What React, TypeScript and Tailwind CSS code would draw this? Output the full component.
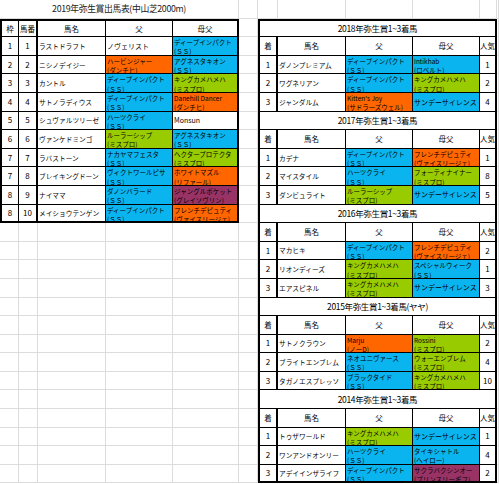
import React from 'react';

type Tone = 'sky' | 'orange' | 'lime' | 'plum' | 'none';
type Blood = { name: string; sub?: string; tone: Tone };
type Entry = { waku: number; num: number; horse: string; sire: Blood; dam: Blood };
type Placed = { rank: number; horse: string; sire: Blood; dam: Blood; pop: number };
type Section = { title: string; rows: Placed[] };

const toneBg: Record<Tone, string> = {
    sky: 'bg-[#0ab4ef]',
    orange: 'bg-[#ff6600]',
    lime: 'bg-[#99cc00]',
    plum: 'bg-[#993366]',
    none: 'bg-white',
};

const dip: Blood = { name: 'ディープインパクト', sub: '(ＳＳ)', tone: 'sky' };
const hearts: Blood = { name: 'ハーツクライ', sub: '(ＳＳ)', tone: 'sky' };
const kingKame: Blood = { name: 'キングカメハメハ', sub: '(ミスプロ)', tone: 'lime' };
const ruler: Blood = { name: 'ルーラーシップ', sub: '(ミスプロ)', tone: 'lime' };
const tachyon: Blood = { name: 'アグネスタキオン', sub: '(ＳＳ)', tone: 'sky' };
const french: Blood = { name: 'フレンチデピュティ', sub: '(ヴァイスリージェ)', tone: 'orange' };
const sunday: Blood = { name: 'サンデーサイレンス', tone: 'sky' };

const entries: Entry[] = [
    { waku: 1, num: 1, horse: 'ラストドラフト', sire: { name: 'ノヴェリスト', tone: 'none' }, dam: dip },
    { waku: 2, num: 2, horse: 'ニシノデイジー', sire: { name: 'ハービンジャー', sub: '(ダンチヒ)', tone: 'orange' }, dam: tachyon },
    { waku: 3, num: 3, horse: 'カントル', sire: dip, dam: kingKame },
    { waku: 4, num: 4, horse: 'サトノラディウス', sire: dip, dam: { name: 'Danehill Dancer', sub: '(ダンチヒ)', tone: 'orange' } },
    { waku: 5, num: 5, horse: 'シュヴァルツリーゼ', sire: hearts, dam: { name: 'Monsun', tone: 'none' } },
    { waku: 6, num: 6, horse: 'ヴァンケドミンゴ', sire: ruler, dam: tachyon },
    { waku: 7, num: 7, horse: 'ラバストーン', sire: { name: 'ナカヤマフェスタ', sub: '(ＳＳ)', tone: 'sky' }, dam: { name: 'ヘクタープロテクタ', sub: '(ミスプロ)', tone: 'lime' } },
    { waku: 7, num: 8, horse: 'ブレイキングドーン', sire: { name: 'ヴィクトワールピサ', sub: '(ＳＳ)', tone: 'sky' }, dam: { name: 'ホワイトマズル', sub: '(リファール)', tone: 'orange' } },
    { waku: 8, num: 9, horse: 'ナイママ', sire: { name: 'ダノンバラード', sub: '(ＳＳ)', tone: 'sky' }, dam: { name: 'ジャングルポケット', sub: '(グレイソヴリン)', tone: 'plum' } },
    { waku: 8, num: 10, horse: 'メイショウテンゲン', sire: dip, dam: french },
];

const sections: Section[] = [
    {
        title: '2018年弥生賞1~3着馬',
        rows: [
            { rank: 1, horse: 'ダノンプレミアム', sire: dip, dam: { name: 'Intikhab', sub: '(ロベルト)', tone: 'sky' }, pop: 1 },
            { rank: 2, horse: 'ワグネリアン', sire: dip, dam: kingKame, pop: 2 },
            { rank: 3, horse: 'ジャンダルム', sire: { name: "Kitten's Joy", sub: '(サドラーズウェル)', tone: 'orange' }, dam: sunday, pop: 4 },
        ],
    },
    {
        title: '2017年弥生賞1~3着馬',
        rows: [
            { rank: 1, horse: 'カデナ', sire: dip, dam: french, pop: 1 },
            { rank: 2, horse: 'マイスタイル', sire: hearts, dam: { name: 'フォーティナイナー', sub: '(ミスプロ)', tone: 'lime' }, pop: 8 },
            { rank: 3, horse: 'ダンビュライト', sire: ruler, dam: sunday, pop: 5 },
        ],
    },
    {
        title: '2016年弥生賞1~3着馬',
        rows: [
            { rank: 1, horse: 'マカヒキ', sire: dip, dam: french, pop: 2 },
            { rank: 2, horse: 'リオンディーズ', sire: kingKame, dam: { name: 'スペシャルウィーク', sub: '(ＳＳ)', tone: 'sky' }, pop: 1 },
            { rank: 3, horse: 'エアスピネル', sire: kingKame, dam: sunday, pop: 3 },
        ],
    },
    {
        title: '2015年弥生賞1~3着馬(ヤヤ)',
        rows: [
            { rank: 1, horse: 'サトノクラウン', sire: { name: 'Marju', sub: '(ノーD)', tone: 'orange' }, dam: { name: 'Rossini', sub: '(ミスプロ)', tone: 'lime' }, pop: 2 },
            { rank: 2, horse: 'ブライトエンブレム', sire: { name: 'ネオユニヴァース', sub: '(ＳＳ)', tone: 'sky' }, dam: { name: 'ウォーエンブレム', sub: '(ミスプロ)', tone: 'lime' }, pop: 4 },
            { rank: 3, horse: 'タガノエスプレッソ', sire: { name: 'ブラックタイド', sub: '(ＳＳ)', tone: 'sky' }, dam: kingKame, pop: 10 },
        ],
    },
    {
        title: '2014年弥生賞1~3着馬',
        rows: [
            { rank: 1, horse: 'トゥザワールド', sire: kingKame, dam: sunday, pop: 1 },
            { rank: 2, horse: 'ワンアンドオンリー', sire: hearts, dam: { name: 'タイキシャトル', sub: '(ヘイロー)', tone: 'sky' }, pop: 4 },
            { rank: 3, horse: 'アデイインザライフ', sire: dip, dam: { name: 'サクラバクシンオー', sub: '(プリンスリーギフ)', tone: 'plum' }, pop: 2 },
        ],
    },
];

// border helper: thick line on the right / bottom edge of a table
const edge = (r2?: boolean, b2?: boolean) =>
    `${r2 ? 'border-r-2' : 'border-r'} ${b2 ? 'border-b-2' : 'border-b'} border-black`;

const BloodCell = ({ b, r2, b2 }: { b: Blood; r2?: boolean; b2?: boolean }) => (
    <div
        className={`${toneBg[b.tone]} ${edge(r2, b2)} overflow-hidden whitespace-nowrap pl-px ${
            b.sub ? 'flex flex-col pt-px text-[6.5px] leading-[9.2px]' : 'flex items-center text-[7px]'
        }`}
    >
        {b.sub ? (
            <>
                <span>{b.name}</span>
                <span>{b.sub}</span>
            </>
        ) : (
            b.name
        )}
    </div>
);

const Center = ({ children, r2, b2, size = 'text-[7.5px]' }: { children: React.ReactNode; r2?: boolean; b2?: boolean; size?: string }) => (
    <div className={`${edge(r2, b2)} ${size} flex items-center justify-center overflow-hidden whitespace-nowrap bg-white`}>
        {children}
    </div>
);

const Name = ({ children, b2 }: { children: React.ReactNode; b2?: boolean }) => (
    <div className={`${edge(false, b2)} flex items-center overflow-hidden whitespace-nowrap bg-white pl-px text-[6.7px]`}>
        {children}
    </div>
);

const App: React.FC = () => {
    const blanks = Array.from({ length: 127 });

    return (
        <div className="grid h-[484px] w-[499px] grid-cols-[19px_19px_68px_67px_66px_19px_20px_68px_67px_67px_17px_2px] grid-rows-[repeat(26,18.6px)] overflow-hidden bg-white font-['Noto_Sans_CJK_JP',sans-serif] text-black">
            <div className="col-span-5 col-start-1 row-start-1 flex items-center justify-center border-r border-b border-[#dcdcdc] text-[8.8px] tracking-[-0.35px] text-[#222]">
                2019年弥生賞出馬表(中山芝2000m)
            </div>

            {/* 出馬表 */}
            <div className="relative z-10 col-span-5 col-start-1 row-span-11 row-start-2 grid grid-cols-[17px_19px_68px_67px_66px] grid-rows-[16.6px_repeat(10,18.6px)] border-t-2 border-l-2 border-black">
                <Center>枠</Center>
                <Center r2>馬番</Center>
                <Center>馬名</Center>
                <Center>父</Center>
                <Center r2>母父</Center>
                {entries.map((e, i) => {
                    const last = i === entries.length - 1;
                    return (
                        <React.Fragment key={e.num}>
                            <Center b2={last} size="text-[8px]">{e.waku}</Center>
                            <Center r2 b2={last} size="text-[8px]">{e.num}</Center>
                            <Name b2={last}>{e.horse}</Name>
                            <BloodCell b={e.sire} b2={last} />
                            <BloodCell b={e.dam} r2 b2={last} />
                        </React.Fragment>
                    );
                })}
            </div>

            {/* 過去の1~3着馬 */}
            <div className="relative z-10 col-span-5 col-start-7 row-span-25 row-start-2 grid grid-cols-[18px_68px_67px_67px_17px] grid-rows-[16.6px_repeat(24,18.6px)] border-t-2 border-l-2 border-black">
                {sections.map((s, si) => (
                    <React.Fragment key={s.title}>
                        <div className="col-span-5 flex items-center justify-center border-r-2 border-b border-black bg-white text-[8.5px] tracking-[-0.35px]">
                            {s.title}
                        </div>
                        <Center r2>着</Center>
                        <Center>馬名</Center>
                        <Center>父</Center>
                        <Center>母父</Center>
                        <Center r2>人気</Center>
                        {s.rows.map((r, ri) => {
                            const last = si === sections.length - 1 && ri === s.rows.length - 1;
                            return (
                                <React.Fragment key={r.rank}>
                                    <Center r2 b2={last} size="text-[8px]">{r.rank}</Center>
                                    <Name b2={last}>{r.horse}</Name>
                                    <BloodCell b={r.sire} b2={last} />
                                    <BloodCell b={r.dam} b2={last} />
                                    <Center r2 b2={last} size="text-[8px]">{r.pop}</Center>
                                </React.Fragment>
                            );
                        })}
                    </React.Fragment>
                ))}
            </div>

            {blanks.map((_, i) => (
                <div key={i} className="border-r border-b border-[#dcdcdc]" />
            ))}
        </div>
    );
};

export default App;
